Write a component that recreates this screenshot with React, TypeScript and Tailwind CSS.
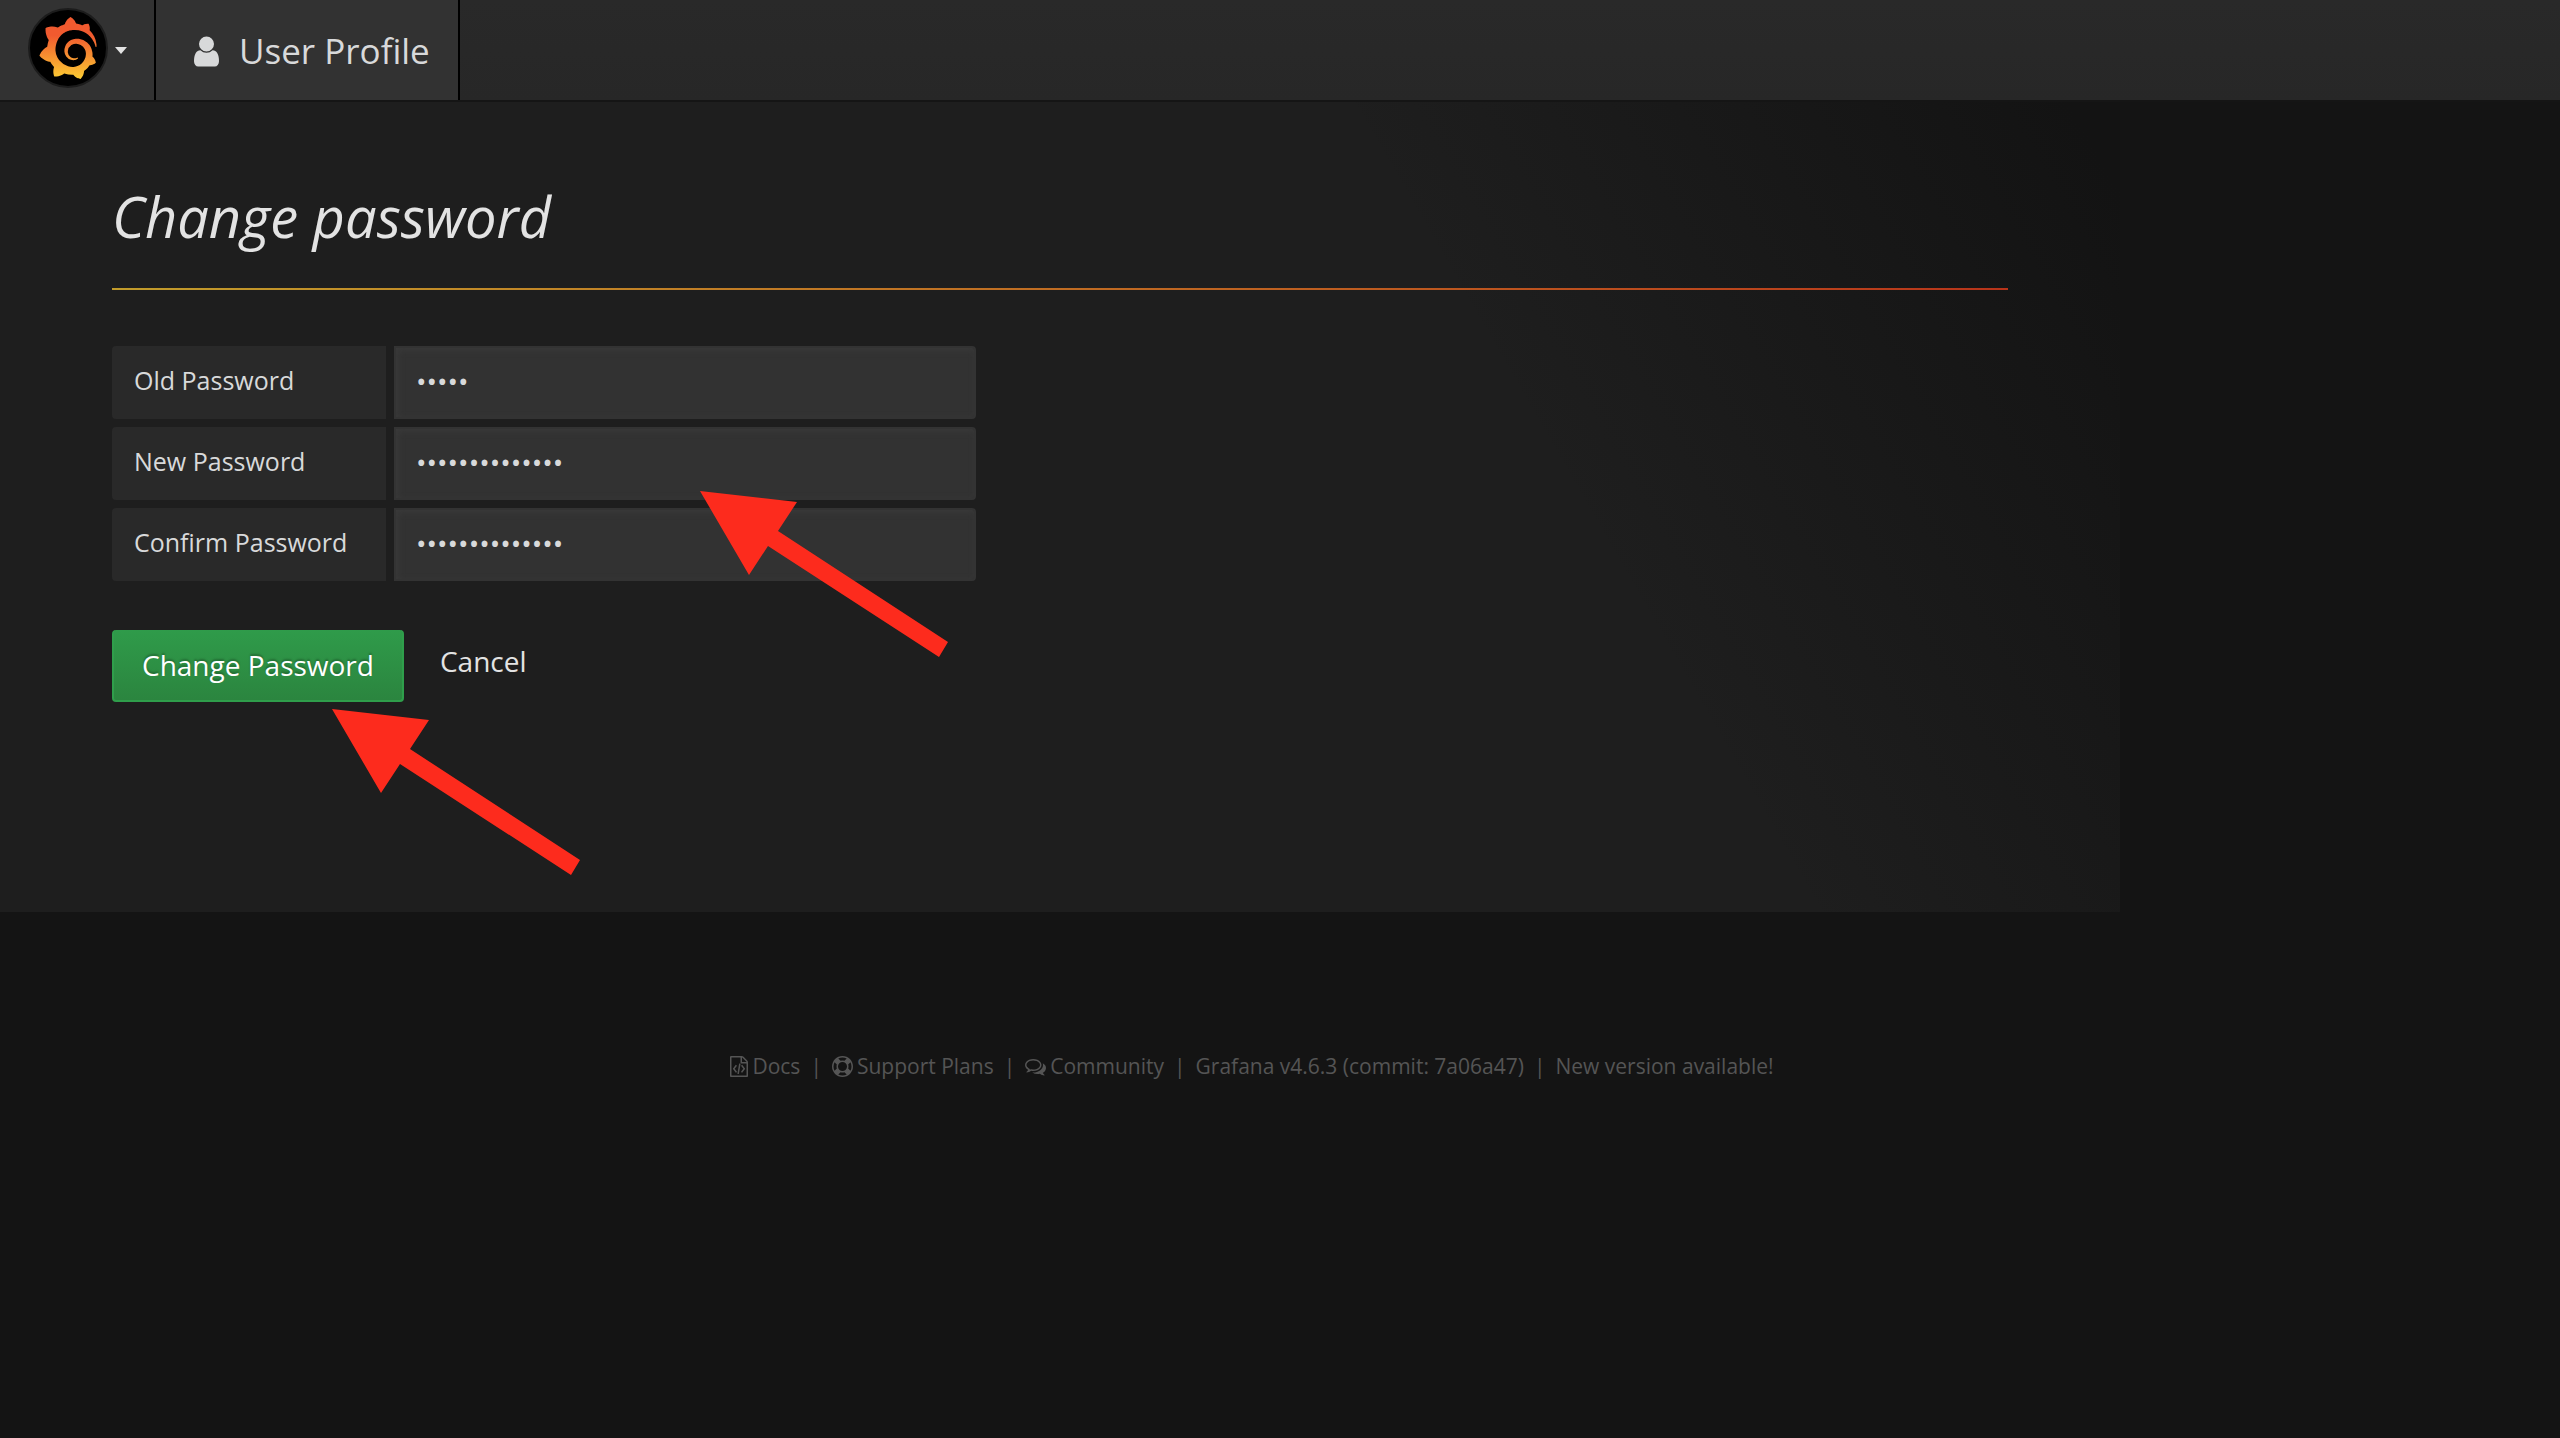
import React, { useState } from "react";
import { SiGrafana } from "react-icons/si";

type IconProps = { className?: string };

function UserIcon({ className }: IconProps) {
  return (
    <svg className={className} viewBox="0 0 1280 1792" fill="currentColor" aria-hidden="true">
      <path d="M1280 1399q0 109-62.5 187t-150.5 78h-854q-88 0-150.5-78t-62.5-187q0-85 8.5-160.5t31.5-152 58.5-131 94-89 134.5-34.5q131 128 313 128t313-128q76 0 134.5 34.5t94 89 58.5 131 31.5 152 8.5 160.5zm-256-887q0 159-112.5 271.5t-271.5 112.5-271.5-112.5-112.5-271.5 112.5-271.5 271.5-112.5 271.5 112.5 112.5 271.5z" />
    </svg>
  );
}

function FileCodeIcon({ className }: IconProps) {
  return (
    <svg className={className} viewBox="128 0 1536 1792" fill="currentColor" aria-hidden="true">
      <path d="M1596 380q28 28 48 76t20 88v1152q0 40-28 68t-68 28h-1344q-40 0-68-28t-28-68v-1600q0-40 28-68t68-28h896q40 0 88 20t76 48zm-444-244v376h376q-10-29-22-41l-313-313q-12-12-41-22zm384 1528v-1024h-416q-40 0-68-28t-28-68v-416h-768v1536h1280zm-928-896q8-11 21-12.5t24 6.5l51 38q11 8 12.5 21t-6.5 24l-182 243 182 243q8 11 6.5 24t-12.5 21l-51 38q-11 8-24 6.5t-21-12.5l-226-301q-14-19 0-38zm802 301q14 19 0 38l-226 301q-8 11-21 12.5t-24-6.5l-51-38q-11-8-12.5-21t6.5-24l182-243-182-243q-8-11-6.5-24t12.5-21l51-38q11-8 24-6.5t21 12.5zm-620 461q-13-2-20.5-13t-5.5-24l138-831q2-13 13-20.5t24-5.5l63 10q13 2 20.5 13t5.5 24l-138 831q-2 13-13 20.5t-24 5.5z" />
    </svg>
  );
}

function LifeRingIcon({ className }: IconProps) {
  return (
    <svg className={className} viewBox="0 0 1792 1792" fill="currentColor" aria-hidden="true">
      <path d="M896 0q182 0 348 71t286 191 191 286 71 348-71 348-191 286-286 191-348 71-348-71-286-191-191-286-71-348 71-348 191-286 286-191 348-71zm0 128q-190 0-361 90l194 194q82-28 167-28t167 28l194-194q-171-90-361-90zm-678 1129l194-194q-28-82-28-167t28-167l-194-194q-90 171-90 361t90 361zm678 407q190 0 361-90l-194-194q-82 28-167 28t-167-28l-194 194q171 90 361 90zm0-384q159 0 271.5-112.5t112.5-271.5-112.5-271.5-271.5-112.5-271.5 112.5-112.5 271.5 112.5 271.5 271.5 112.5zm484-217l194 194q90-171 90-361t-90-361l-194 194q28 82 28 167t-28 167z" />
    </svg>
  );
}

function CommentsIcon({ className }: IconProps) {
  return (
    <svg className={className} viewBox="0 0 1792 1792" fill="currentColor" aria-hidden="true">
      <path d="M704 384q-153 0-286 52t-211.5 141-78.5 191q0 82 53 158t149 132l97 56-35 84q34-20 62-39l44-31 53 10q78 14 153 14 153 0 286-52t211.5-141 78.5-191-78.5-191-211.5-141-286-52zm0-128q191 0 353.5 68.5t256.5 186.5 94 257-94 257-256.5 186.5-353.5 68.5q-86 0-176-16-124 88-278 128-36 9-86 16h-3q-11 0-20.5-8t-11.5-21q-1-3-1-6.5t.5-6.5 2-6l2.5-5 3.5-5.5 4-5 4.5-5 4-4.5q5-6 23-25t26-29.5 22.5-29 25-38.5 20.5-44q-124-72-195-177t-71-224q0-139 94-257t256.5-186.5 353.5-68.5zm822 1169q10 24 20.5 44t25 38.5 22.5 29 26 29.5 23 25q1 1 4 4.5t4.5 5 4 5 3.5 5.5l2.5 5 2 6 .5 6.5-1 6.5q-3 14-13 22t-22 7q-50-7-86-16-154-40-278-128-90 16-176 16-271 0-472-132 58 4 88 4 161 0 309-45t264-129q125-92 192-212t67-254q0-77-23-152 129 71 204 178t75 230q0 120-71 224.5t-195 176.5z" />
    </svg>
  );
}

function Arrow({ className }: IconProps) {
  return (
    <svg className={className} viewBox="0 0 248 166" fill="#fd2b1d" aria-hidden="true">
      <path d="M0 0 97 11 78 40 248 151 239 166 68 55 49 84z" />
    </svg>
  );
}

function Navbar() {
  return (
    <header className="flex h-[102px] border-b-2 border-[#151515] bg-linear-to-b from-[#292929] to-[#272727] text-[#d8d9da]">
      <button
        type="button"
        aria-label="Main menu"
        className="flex items-center border-r-2 border-black bg-[#323232] pr-[27px] pl-7"
      >
        <span className="mt-[-4px] flex size-20 items-center justify-center rounded-full border-2 border-[#1c1c1c] bg-black">
          <svg className="size-0" aria-hidden="true">
            <defs>
              <linearGradient id="brand" x1="0" y1="0" x2="0" y2="1">
                <stop offset="0.3" stopColor="#f05a2f" />
                <stop offset="1" stopColor="#fccc33" />
              </linearGradient>
            </defs>
          </svg>
          <SiGrafana className="size-[62px] shrink-0" style={{ fill: "url(#brand)" }} />
        </span>
        <svg className="ml-[7px] h-[7px] w-3" viewBox="0 0 12 7" fill="#e3e3e3" aria-hidden="true">
          <path d="M0 0H12L6 7z" />
        </svg>
      </button>
      <a href="#profile" className="flex items-center border-r-2 border-black bg-[#323232] pt-0.5 pr-7 pl-[38px]">
        <UserIcon className="h-[35px] w-[25px]" />
        <span className="ml-5 text-[35px] leading-[48px]">User Profile</span>
      </a>
    </header>
  );
}

type FieldProps = { id: string; label: string; value: string; onChange: (v: string) => void };

function PasswordField({ id, label, value, onChange }: FieldProps) {
  return (
    <div className="flex gap-2">
      <label
        htmlFor={id}
        className="flex h-[73px] w-[274px] items-center rounded-l-sm bg-[#292929] pb-1 pl-[22px] text-[25px] text-[#d8d9da]"
      >
        {label}
      </label>
      <input
        id={id}
        type="password"
        value={value}
        onChange={(e) => onChange(e.target.value)}
        className="h-[73px] w-[582px] rounded-r-sm border-2 border-[#333333] bg-[#323232] px-5 pb-1 text-[28px] text-[#d8d9da] shadow-[inset_2px_2px_6px_#3a3a3a] outline-none"
      />
    </div>
  );
}

function Separator() {
  return (
    <span aria-hidden="true" className="px-[10px]">
      |
    </span>
  );
}

function Footer() {
  return (
    <footer className="mt-[140px] flex items-center justify-center pr-14 text-[21px] leading-7 text-[#555555]">
      <a href="#docs" className="flex items-center gap-1">
        <FileCodeIcon className="h-[21px] w-[18px]" />
        Docs
      </a>
      <Separator />
      <a href="#support" className="flex items-center gap-1">
        <LifeRingIcon className="size-[21px]" />
        Support Plans
      </a>
      <Separator />
      <a href="#community" className="flex items-center gap-1">
        <CommentsIcon className="size-[21px]" />
        Community
      </a>
      <Separator />
      <a href="#version">Grafana v4.6.3 (commit: 7a06a47)</a>
      <Separator />
      <a href="#update">New version available!</a>
    </footer>
  );
}

export default function App() {
  const [oldPassword, setOldPassword] = useState("admin");
  const [newPassword, setNewPassword] = useState("grafana-secret");
  const [confirmPassword, setConfirmPassword] = useState("grafana-secret");

  return (
    <div className="min-h-screen bg-[#141414] font-['Open_Sans',sans-serif]">
      <Navbar />
      <main className="w-full max-w-[2120px] bg-[#1e1e1e] bg-[linear-gradient(60deg,transparent_70%,#131313_98%)] px-28 pt-[76px] pb-[210px]">
        <h1 className="pb-[34px] text-[56px] leading-[76px] text-[#e3e3e3] italic">Change password</h1>
        <div className="h-[2px] bg-linear-to-r from-[#c29c2b] to-[#b8341a]" />
        <form className="relative mt-14" onSubmit={(e) => e.preventDefault()}>
          <div className="flex flex-col gap-2">
            <PasswordField id="old-password" label="Old Password" value={oldPassword} onChange={setOldPassword} />
            <PasswordField id="new-password" label="New Password" value={newPassword} onChange={setNewPassword} />
            <PasswordField
              id="confirm-password"
              label="Confirm Password"
              value={confirmPassword}
              onChange={setConfirmPassword}
            />
          </div>
          <div className="mt-[49px] flex items-start gap-9">
            <button
              type="submit"
              className="h-[72px] rounded border-2 border-t-0 border-[#2f9e4b] bg-linear-to-b from-[#2f9b4a] to-[#2b853f] px-7 text-[28px] text-white [text-shadow:0_-2px_2px_rgba(0,0,0,0.25)]"
            >
              Change Password
            </button>
            <a href="#profile" className="py-3 text-[28px] leading-[38px] text-[#e3e3e3]">
              Cancel
            </a>
          </div>
          <Arrow className="pointer-events-none absolute top-[145px] left-[588px] h-[166px] w-[248px]" />
          <Arrow className="pointer-events-none absolute top-[363px] left-[220px] h-[166px] w-[248px]" />
        </form>
      </main>
      <Footer />
    </div>
  );
}
